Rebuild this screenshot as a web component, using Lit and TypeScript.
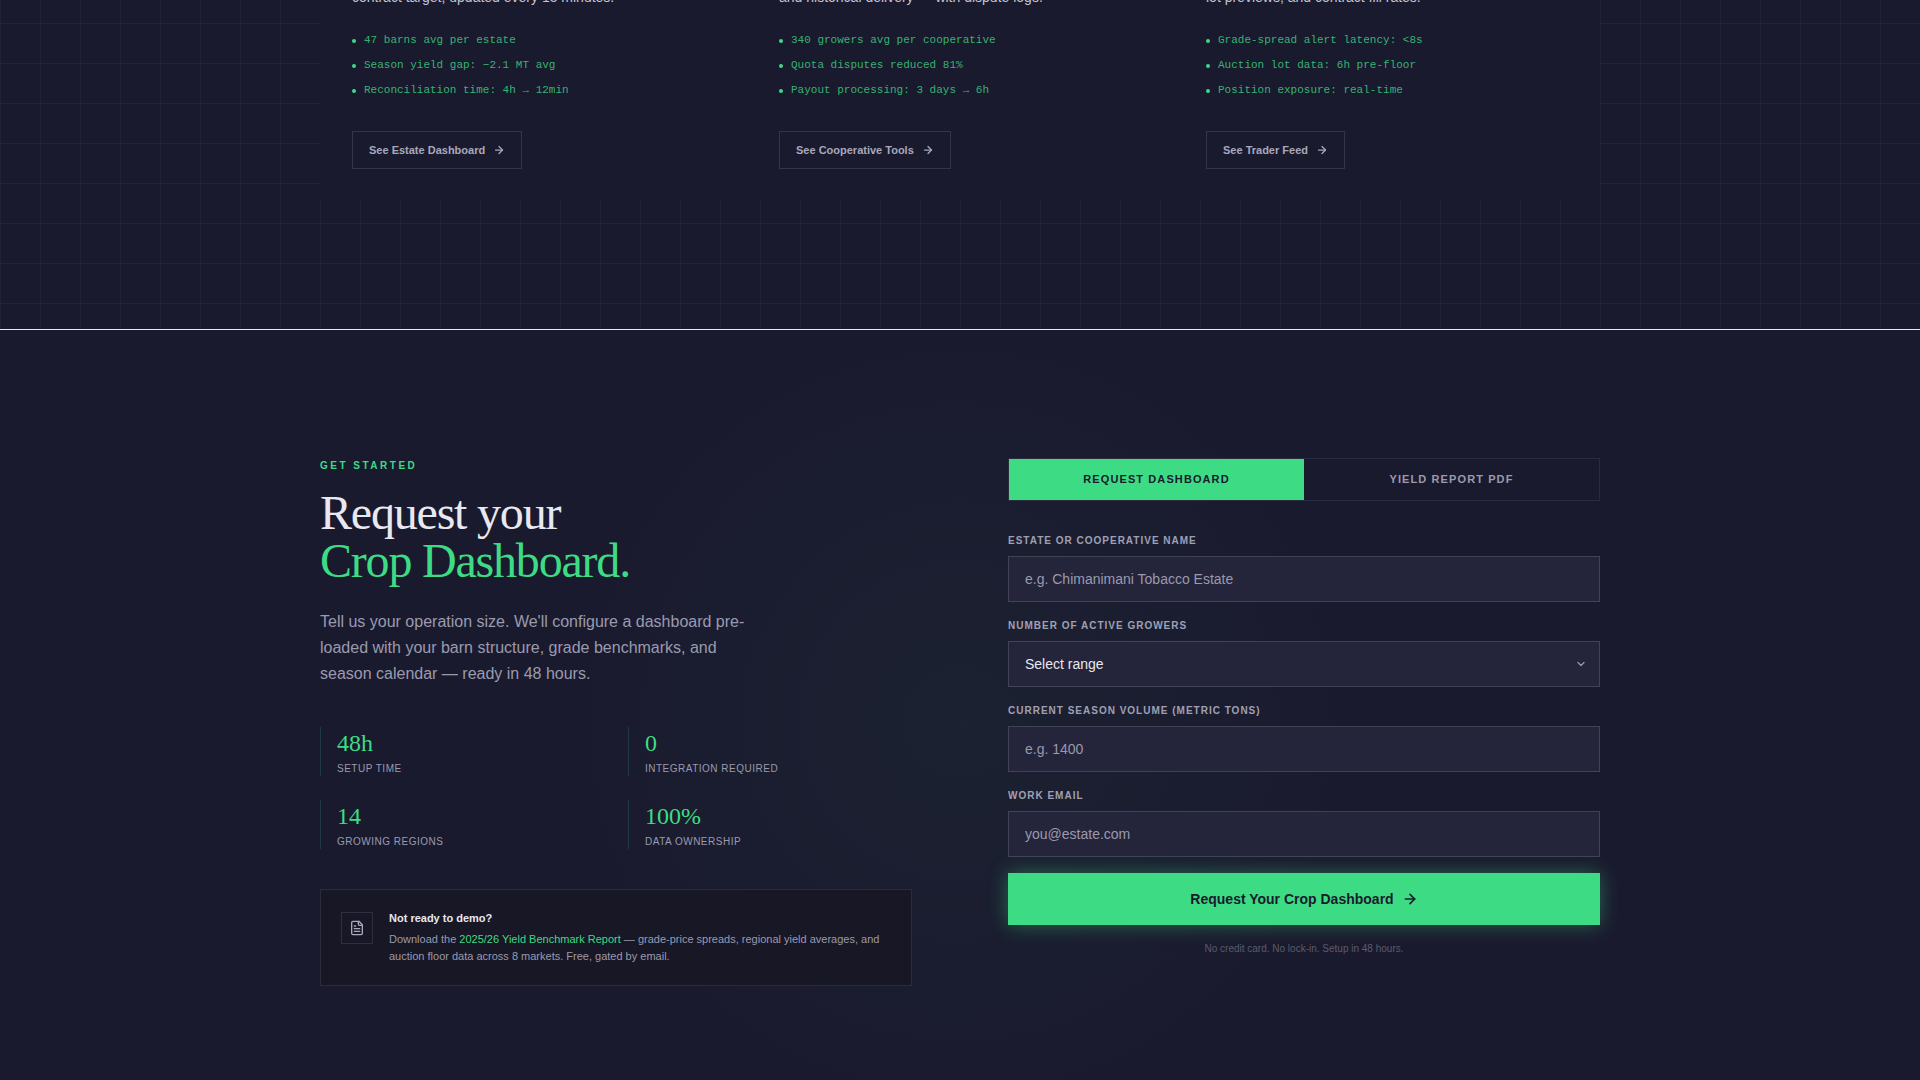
import { LitElement, html, css, svg } from "lit";
import { customElement, state } from "lit/decorators.js";

interface Audience {
  summary: string;
  facts: string[];
  action: string;
}

const AUDIENCES: Audience[] = [
  {
    summary: "contract target, updated every 15 minutes.",
    facts: ["47 barns avg per estate", "Season yield gap: −2.1 MT avg", "Reconciliation time: 4h → 12min"],
    action: "See Estate Dashboard",
  },
  {
    summary: "and historical delivery — with dispute logs.",
    facts: ["340 growers avg per cooperative", "Quota disputes reduced 81%", "Payout processing: 3 days → 6h"],
    action: "See Cooperative Tools",
  },
  {
    summary: "lot previews, and contract fill rates.",
    facts: ["Grade-spread alert latency: <8s", "Auction lot data: 6h pre-floor", "Position exposure: real-time"],
    action: "See Trader Feed",
  },
];

const STATS = [
  { value: "48h", label: "Setup time" },
  { value: "0", label: "Integration required" },
  { value: "14", label: "Growing regions" },
  { value: "100%", label: "Data ownership" },
];

const arrow = (size: number) => html`<svg
  class="icon bold"
  width=${size}
  height=${size}
  viewBox="0 0 24 24"
  aria-hidden="true"
>
  ${svg`<path d="M5 12h14"/><path d="m12 5 7 7-7 7"/>`}
</svg>`;

const shared = css`
  *,
  *::before,
  *::after {
    box-sizing: border-box;
  }
  h2,
  p,
  ul,
  dl,
  dd {
    margin: 0;
    padding: 0;
  }
  .icon {
    display: block;
    flex: none;
    fill: none;
    stroke: currentColor;
    stroke-width: 2;
    stroke-linecap: round;
    stroke-linejoin: round;
  }
  .bold {
    stroke-width: 2.5;
  }
`;

@customElement("audience-card")
class AudienceCard extends LitElement {
  static properties = { data: { attribute: false } };
  declare data: Audience;

  static styles = [
    shared,
    css`
      :host {
        display: block;
        background: #1a1a2e;
        padding: 0 32px 32px;
      }
      .summary {
        font-size: 14px;
        line-height: 21px;
        color: #c4c4d4;
      }
      .facts {
        list-style: none;
        display: grid;
        gap: 8px;
        margin: 24px 0 32px;
        font-family: "Liberation Mono", monospace;
        font-size: 11px;
        line-height: 17px;
        color: rgba(61, 220, 132, 0.8);
      }
      .fact {
        display: flex;
        align-items: center;
        gap: 8px;
      }
      .fact::before {
        content: "";
        width: 4px;
        height: 4px;
        border-radius: 50%;
        background: #3ddc84;
      }
      .more {
        display: inline-flex;
        align-items: center;
        gap: 8px;
        padding: 10px 16px;
        border: 1px solid #35354a;
        font-size: 11px;
        line-height: 16px;
        font-weight: 700;
        color: #a8a8bc;
        text-decoration: none;
      }
    `,
  ];

  render() {
    return html`
      <p class="summary">${this.data.summary}</p>
      <ul class="facts">
        ${this.data.facts.map((f) => html`<li class="fact">${f}</li>`)}
      </ul>
      <a class="more" href="#request">${this.data.action}${arrow(12)}</a>
    `;
  }
}

@customElement("request-form")
class RequestForm extends LitElement {
  @state() private tab = 0;

  static styles = [
    shared,
    css`
      :host {
        display: block;
      }
      .tabs {
        display: flex;
        border: 1px solid #2b2b3f;
        margin-bottom: 32px;
      }
      .tab {
        flex: 1;
        padding: 12px;
        border: 0;
        background: transparent;
        font: 700 11px/17px "Liberation Sans", sans-serif;
        letter-spacing: 0.1em;
        text-transform: uppercase;
        color: #9a9aae;
      }
      .tab.active {
        background: #3ddc84;
        color: #1a1a2e;
      }
      .form {
        display: grid;
        gap: 16px;
      }
      .field {
        display: grid;
        gap: 8px;
      }
      .label {
        font-size: 10px;
        line-height: 15px;
        font-weight: 700;
        letter-spacing: 0.1em;
        text-transform: uppercase;
        color: #a0a0b4;
      }
      .control {
        width: 100%;
        height: 46px;
        padding: 0 16px;
        border: 1px solid #424254;
        border-radius: 0;
        background: #24243a;
        font: 14px/20px "Liberation Sans", sans-serif;
        color: #e8e8f0;
        appearance: none;
        outline: none;
      }
      .control::placeholder {
        color: #9a9aae;
        opacity: 1;
      }
      .select {
        display: grid;
        align-items: center;
      }
      .select > * {
        grid-area: 1 / 1;
      }
      .chevron {
        justify-self: end;
        margin-right: 13px;
        color: #9a9aae;
        pointer-events: none;
      }
      .submit {
        display: flex;
        align-items: center;
        justify-content: center;
        gap: 8px;
        padding: 16px;
        border: 0;
        background: #3ddc84;
        box-shadow: 0 0 20px rgba(61, 220, 132, 0.4);
        font: 700 14px/20px "Liberation Sans", sans-serif;
        color: #1a1a2e;
      }
      .note {
        font-size: 10px;
        line-height: 15px;
        text-align: center;
        color: #5a5a6e;
      }
    `,
  ];

  render() {
    const tabs = ["Request Dashboard", "Yield Report PDF"];
    return html`
      <div class="tabs" role="tablist">
        ${tabs.map(
          (t, i) => html`<button
            class="tab ${i === this.tab ? "active" : ""}"
            type="button"
            role="tab"
            aria-selected=${i === this.tab ? "true" : "false"}
            @click=${() => (this.tab = i)}
          >${t}</button>`,
        )}
      </div>
      <form class="form" @submit=${(e: Event) => e.preventDefault()}>
        <div class="field">
          <label class="label" for="name">Estate or cooperative name</label>
          <input class="control" id="name" type="text" placeholder="e.g. Chimanimani Tobacco Estate" />
        </div>
        <div class="field">
          <label class="label" for="growers">Number of active growers</label>
          <div class="select">
            <select class="control" id="growers">
              <option>Select range</option>
            </select>
            <svg class="icon bold chevron" width="12" height="12" viewBox="0 0 24 24" aria-hidden="true">
              <path d="m6 9 6 6 6-6" />
            </svg>
          </div>
        </div>
        <div class="field">
          <label class="label" for="volume">Current season volume (metric tons)</label>
          <input class="control" id="volume" type="text" placeholder="e.g. 1400" />
        </div>
        <div class="field">
          <label class="label" for="email">Work email</label>
          <input class="control" id="email" type="email" placeholder="you@estate.com" />
        </div>
        <button class="submit" type="submit">Request Your Crop Dashboard${arrow(16)}</button>
        <p class="note">No credit card. No lock-in. Setup in 48 hours.</p>
      </form>
    `;
  }
}

@customElement("app-root")
class AppRoot extends LitElement {
  static styles = [
    shared,
    css`
      :host {
        display: block;
        min-height: 100vh;
        overflow: hidden;
        background: #1a1a2e;
        color: #e8e8f0;
        font-family: "Liberation Sans", sans-serif;
      }
      .audiences {
        margin-top: -13px;
        padding: 0 32px 128px;
        background-image: linear-gradient(to right, rgba(232, 232, 240, 0.04) 1px, transparent 1px),
          linear-gradient(to bottom, rgba(232, 232, 240, 0.04) 1px, transparent 1px);
        background-size: 40px 40px;
        background-position: 0 36px;
      }
      .cards {
        display: grid;
        grid-template-columns: repeat(3, 1fr);
        gap: 1px;
        max-width: 1280px;
        margin: 0 auto;
        background: #1c1c30;
      }
      .request {
        padding: 128px 32px;
        border-top: 1px solid #e8e8f0;
        background: radial-gradient(circle 396px at center, rgba(61, 220, 132, 0.04), transparent);
      }
      .columns {
        display: grid;
        grid-template-columns: 1fr 1fr;
        gap: 96px;
        max-width: 1280px;
        margin: 0 auto;
      }
      .eyebrow {
        font-size: 10px;
        line-height: 15px;
        font-weight: 700;
        letter-spacing: 0.25em;
        text-transform: uppercase;
        color: #3ddc84;
      }
      .title {
        margin: 16px 0 24px;
        font: 400 48px/48px "Liberation Serif", serif;
        letter-spacing: -0.025em;
      }
      .accent {
        display: block;
        color: #3ddc84;
      }
      .lead {
        max-width: 448px;
        margin-bottom: 40px;
        font-size: 16px;
        line-height: 26px;
        color: #9a9aae;
      }
      .stats {
        display: grid;
        grid-template-columns: 1fr 1fr;
        gap: 24px;
        margin-bottom: 40px;
      }
      .stat {
        display: flex;
        flex-direction: column-reverse;
        gap: 2px;
        padding-left: 16px;
        border-left: 1px solid #213a42;
      }
      .value {
        font: 24px/32px "Liberation Serif", serif;
        color: #3ddc84;
      }
      .caption {
        font-size: 10px;
        line-height: 15px;
        letter-spacing: 0.05em;
        text-transform: uppercase;
        color: #9a9aae;
      }
      .offer {
        display: flex;
        gap: 16px;
        padding: 20px;
        border: 1px solid #2b2b3c;
        background: #171725;
        font-size: 11px;
        line-height: 17px;
      }
      .badge {
        display: grid;
        place-items: center;
        flex: none;
        width: 32px;
        height: 32px;
        margin-top: 2px;
        border: 1px solid #2f2f42;
        color: #a8a8bc;
      }
      .offer-title {
        margin-bottom: 4px;
        font-weight: 700;
      }
      .offer-text {
        color: #9a9aae;
      }
      .link {
        color: #3ddc84;
        text-decoration: none;
      }
    `,
  ];

  render() {
    return html`
      <section class="audiences">
        <div class="cards">
          ${AUDIENCES.map((a) => html`<audience-card .data=${a}></audience-card>`)}
        </div>
      </section>
      <section class="request" id="request">
        <div class="columns">
          <div>
            <p class="eyebrow">Get started</p>
            <h2 class="title">Request your <span class="accent">Crop Dashboard.</span></h2>
            <p class="lead">
              Tell us your operation size. We'll configure a dashboard pre-loaded with your barn
              structure, grade benchmarks, and season calendar — ready in 48 hours.
            </p>
            <dl class="stats">
              ${STATS.map(
                (s) => html`<div class="stat">
                  <dt class="caption">${s.label}</dt>
                  <dd class="value">${s.value}</dd>
                </div>`,
              )}
            </dl>
            <aside class="offer">
              <div class="badge">
                <svg class="icon" width="16" height="16" viewBox="0 0 24 24" aria-hidden="true">
                  <path d="M15 2H6a2 2 0 0 0-2 2v16a2 2 0 0 0 2 2h12a2 2 0 0 0 2-2V7Z" />
                  <path d="M14 2v4a2 2 0 0 0 2 2h4" />
                  <path d="M10 9H8" />
                  <path d="M16 13H8" />
                  <path d="M16 17H8" />
                </svg>
              </div>
              <div>
                <p class="offer-title">Not ready to demo?</p>
                <p class="offer-text">
                  Download the <a class="link" href="#request">2025/26 Yield Benchmark Report</a> —
                  grade-price spreads, regional yield averages, and auction floor data across 8
                  markets. Free, gated by email.
                </p>
              </div>
            </aside>
          </div>
          <request-form></request-form>
        </div>
      </section>
    `;
  }
}
